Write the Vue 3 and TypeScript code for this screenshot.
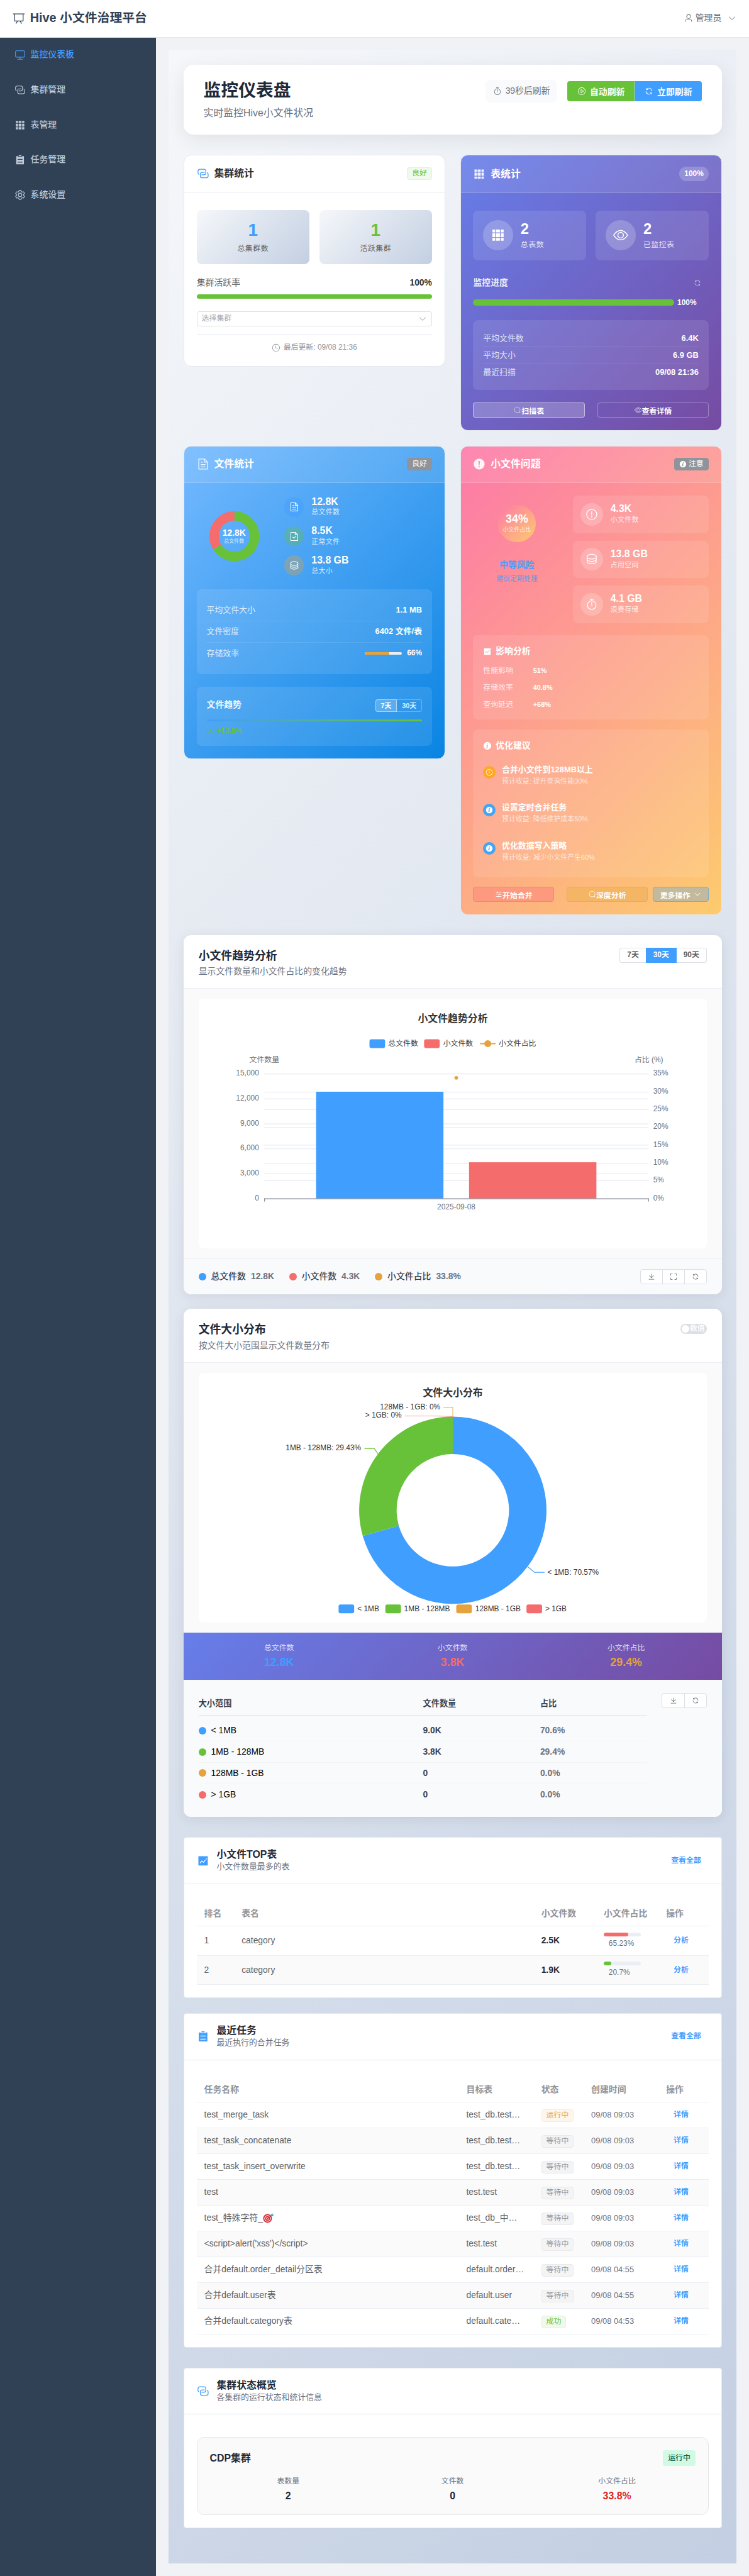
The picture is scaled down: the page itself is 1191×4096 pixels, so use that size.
<script setup lang="ts">
import { h, type FunctionalComponent } from 'vue'

const paths: Record<string, string> = {
  board: 'M32 128h960v64H32zM192 192v512h640V192H192zm-64-64h768v608a32 32 0 0 1-32 32H160a32 32 0 0 1-32-32V128zM322.176 960H248.32l144.64-250.56 55.424 32L322.176 960zm453.888 0h-73.856L576 741.44l55.424-32L776.064 960z',
  monitor: 'M544 768v128h192a32 32 0 1 1 0 64H288a32 32 0 1 1 0-64h192V768H192A128 128 0 0 1 64 640V256a128 128 0 0 1 128-128h640a128 128 0 0 1 128 128v384a128 128 0 0 1-128 128H544zM192 192a64 64 0 0 0-64 64v384a64 64 0 0 0 64 64h640a64 64 0 0 0 64-64V256a64 64 0 0 0-64-64H192z',
  connection: 'M640 384v64H448a128 128 0 0 0-128 128v128a128 128 0 0 0 128 128h320a128 128 0 0 0 128-128V576a128 128 0 0 0-64-110.848V394.88c74.56 26.368 128 97.472 128 181.056v128a192 192 0 0 1-192 192H448a192 192 0 0 1-192-192V576a192 192 0 0 1 192-192h192zM384 640v-64h192a128 128 0 0 0 128-128V320a128 128 0 0 0-128-128H256a128 128 0 0 0-128 128v128a128 128 0 0 0 64 110.848v70.272A192.064 192.064 0 0 1 64 448V320a192 192 0 0 1 192-192h320a192 192 0 0 1 192 192v128a192 192 0 0 1-192 192H384z',
  grid: 'M640 384v256H384V384h256zm64 0h192v256H704V384zm-64 512H384V704h256v192zm64 0V704h192v192H704zm-64-768v192H384V128h256zm64 0h192v192H704V128zM320 384v256H128V384h192zm0 512H128V704h192v192zm0-768v192H128V128h192z',
  list: 'M704 192h160v736H160V192h160v64h384v-64zM288 512h448v-64H288v64zm0 256h448v-64H288v64zm96-576V96h256v96H384z',
  setting: 'M600.704 64a32 32 0 0 1 30.464 22.208l35.2 109.376c14.784 7.232 28.928 15.36 42.432 24.512l112.384-24.192a32 32 0 0 1 34.432 15.36L944.32 364.8a32 32 0 0 1-4.032 37.504l-77.12 85.12a357.12 357.12 0 0 1 0 49.024l77.12 85.248a32 32 0 0 1 4.032 37.504l-88.704 153.6a32 32 0 0 1-34.432 15.296L708.8 803.904c-13.44 9.088-27.648 17.28-42.368 24.512l-35.264 109.376A32 32 0 0 1 600.704 960H423.296a32 32 0 0 1-30.464-22.208L357.696 828.48a351.616 351.616 0 0 1-42.56-24.64l-112.32 24.256a32 32 0 0 1-34.432-15.36L79.68 659.2a32 32 0 0 1 4.032-37.504l77.12-85.248a357.12 357.12 0 0 1 0-48.896l-77.12-85.248A32 32 0 0 1 79.68 364.8l88.704-153.6a32 32 0 0 1 34.432-15.296l112.32 24.256c13.568-9.152 27.776-17.408 42.56-24.64l35.2-109.312A32 32 0 0 1 423.232 64H600.64zm-23.424 64H446.72l-36.352 113.088-24.512 11.968a294.113 294.113 0 0 0-34.816 20.096l-22.656 15.36-116.224-25.088-65.28 113.152 79.68 88.192-1.92 27.136a293.12 293.12 0 0 0 0 40.192l1.92 27.136-79.808 88.192 65.344 113.152 116.224-25.024 22.656 15.296a294.113 294.113 0 0 0 34.816 20.096l24.512 11.968L446.72 896h130.688l36.48-113.152 24.448-11.904a288.282 288.282 0 0 0 34.752-20.096l22.592-15.296 116.288 25.024 65.28-113.152-79.744-88.192 1.92-27.136a293.12 293.12 0 0 0 0-40.256l-1.92-27.136 79.808-88.128-65.344-113.152-116.288 24.96-22.592-15.232a287.616 287.616 0 0 0-34.752-20.096l-24.448-11.904L577.344 128zM512 320a192 192 0 1 1 0 384 192 192 0 0 1 0-384zm0 64a128 128 0 1 0 0 256 128 128 0 0 0 0-256z',
  user: 'M512 512a192 192 0 1 0 0-384 192 192 0 0 0 0 384zm0 64a256 256 0 1 1 0-512 256 256 0 0 1 0 512zm320 320v-96a96 96 0 0 0-96-96H288a96 96 0 0 0-96 96v96a32 32 0 1 1-64 0v-96a160 160 0 0 1 160-160h448a160 160 0 0 1 160 160v96a32 32 0 1 1-64 0z',
  down: 'M831.872 340.864 512 652.672 192.128 340.864a30.592 30.592 0 0 0-42.752 0 29.12 29.12 0 0 0 0 41.6L489.664 714.24a32 32 0 0 0 44.672 0l340.288-331.712a29.12 29.12 0 0 0 0-41.728 30.592 30.592 0 0 0-42.752 0z',
  up: 'm488.832 344.32-339.84 356.672a32 32 0 0 0 0 44.16l.384.384a29.44 29.44 0 0 0 42.688 0l320-335.872 319.872 335.872a29.44 29.44 0 0 0 42.688 0l.384-.384a32 32 0 0 0 0-44.16L535.168 344.32a32 32 0 0 0-46.336 0z',
  timer: 'M512 896a320 320 0 1 0 0-640 320 320 0 0 0 0 640zm0 64a384 384 0 1 1 0-768 384 384 0 0 1 0 768zM512 320a32 32 0 0 1 32 32l-.512 224a32 32 0 1 1-64 0L480 352a32 32 0 0 1 32-32zM448 576a64 64 0 1 0 128 0 64 64 0 1 0-128 0zm96-448v128h-64V128h-96a32 32 0 0 1 0-64h256a32 32 0 1 1 0 64h-96z',
  play: 'M512 64a448 448 0 1 1 0 896 448 448 0 0 1 0-896zm0 832a384 384 0 0 0 0-768 384 384 0 0 0 0 768zm-48-247.616L668.608 512 464 375.616v272.768zm10.624-342.656 249.472 166.336a48 48 0 0 1 0 79.872L474.624 718.272A48 48 0 0 1 400 678.336V345.6a48 48 0 0 1 74.624-39.936z',
  refresh: 'M771.776 794.88A384 384 0 0 1 128 512h64a320 320 0 0 0 555.712 216.448H654.72a32 32 0 1 1 0-64h149.056a32 32 0 0 1 32 32v148.928a32 32 0 1 1-64 0v-50.56zM276.288 295.616h92.992a32 32 0 0 1 0 64H220.16a32 32 0 0 1-32-32V178.56a32 32 0 0 1 64 0v50.56A384 384 0 0 1 896.128 512h-64a320 320 0 0 0-555.776-216.384z',
  clock: 'M512 896a384 384 0 1 0 0-768 384 384 0 0 0 0 768zm0 64a448 448 0 1 1 0-896 448 448 0 0 1 0 896zM480 256a32 32 0 0 1 32 32v256a32 32 0 0 1-64 0V288a32 32 0 0 1 32-32zM480 512h256q32 0 32 32t-32 32H480q-32 0-32-32t32-32z',
  view: 'M512 160c320 0 512 352 512 352S832 864 512 864 0 512 0 512s192-352 512-352zm0 64c-225.28 0-384.128 208.064-436.8 288 52.608 79.872 211.456 288 436.8 288 225.28 0 384.128-208.064 436.8-288-52.608-79.872-211.456-288-436.8-288zm0 64a224 224 0 1 1 0 448 224 224 0 0 1 0-448zm0 64a160.192 160.192 0 0 0-160 160c0 88.192 71.744 160 160 160s160-71.808 160-160-71.744-160-160-160z',
  search: 'm795.904 750.72 124.992 124.928a32 32 0 0 1-45.248 45.248L750.656 795.904a416 416 0 1 1 45.248-45.248zM480 832a352 352 0 1 0 0-704 352 352 0 0 0 0 704z',
  doc: 'M832 384H576V128H192v768h640V384zm-26.496-64L640 154.496V320h165.504zM160 64h480l256 256v608a32 32 0 0 1-32 32H160a32 32 0 0 1-32-32V96a32 32 0 0 1 32-32zm160 448h384v64H320v-64zm0-192h160v64H320v-64zm0 384h384v64H320v-64z',
  docCheck: 'M805.504 320 640 154.496V320h165.504zM832 384H576V128H192v768h640V384zM160 64h480l256 256v608a32 32 0 0 1-32 32H160a32 32 0 0 1-32-32V96a32 32 0 0 1 32-32zm318.4 582.144 180.992-180.992L704.64 510.4 478.4 736.64 320 578.304l45.248-45.312L478.4 646.144z',
  coin: 'm161.92 580.736 29.888 58.88C171.328 659.776 160 681.728 160 704c0 82.304 155.328 160 352 160s352-77.696 352-160c0-22.272-11.392-44.16-31.808-64.32l30.464-58.432C903.936 615.808 928 657.664 928 704c0 129.728-188.544 224-416 224S96 833.728 96 704c0-46.592 24.32-88.576 65.92-123.264zM161.92 388.736l29.888 58.88C171.328 467.84 160 489.792 160 512c0 82.304 155.328 160 352 160s352-77.696 352-160c0-22.272-11.392-44.16-31.808-64.32l30.464-58.432C903.936 423.808 928 465.664 928 512c0 129.728-188.544 224-416 224S96 641.728 96 512c0-46.592 24.32-88.576 65.92-123.264zM512 544c-227.456 0-416-94.272-416-224S284.544 96 512 96s416 94.272 416 224-188.544 224-416 224zm0-64c196.672 0 352-77.696 352-160S708.672 160 512 160s-352 77.696-352 160 155.328 160 352 160z',
  warning: 'M512 64a448 448 0 1 1 0 896 448 448 0 0 1 0-896zm0 832a384 384 0 0 0 0-768 384 384 0 0 0 0 768zm48-176a48 48 0 1 1-96 0 48 48 0 0 1 96 0zm-48-464a32 32 0 0 1 32 32v288a32 32 0 0 1-64 0V288a32 32 0 0 1 32-32z',
  warningFilled: 'M512 64a448 448 0 1 1 0 896 448 448 0 0 1 0-896zm0 192a58.432 58.432 0 0 0-58.24 63.744l23.36 256.384a35.072 35.072 0 0 0 69.76 0l23.296-256.384A58.432 58.432 0 0 0 512 256zm0 512a51.2 51.2 0 1 0 0-102.4 51.2 51.2 0 0 0 0 102.4z',
  info: 'M512 64a448 448 0 1 1 0 896.064A448 448 0 0 1 512 64zm67.2 275.072c33.28 0 60.288-23.104 60.288-57.344s-27.072-57.344-60.288-57.344c-33.28 0-60.16 23.104-60.16 57.344s26.88 57.344 60.16 57.344zM590.912 699.2c0-6.848 2.368-24.64 1.024-34.752l-52.608 60.544c-10.88 11.456-24.512 19.392-30.912 17.28a12.992 12.992 0 0 1-8.256-14.72l87.68-276.992c7.168-35.136-12.544-67.2-54.336-71.296-44.096 0-108.992 44.736-148.48 101.504 0 6.784-1.28 23.68.064 33.792l52.544-60.608c10.88-11.328 23.552-19.328 29.952-17.152a12.8 12.8 0 0 1 7.808 16.128L388.48 728.576c-10.048 32.256 8.96 63.872 55.04 71.04 67.84 0 107.904-43.648 147.456-100.416z',
  trend: 'M128 896V128h768v768H128zm291.712-327.296 128 102.4 180.16-201.792-47.744-42.624-139.84 156.608-128-102.4-180.16 201.792 47.744 42.624 139.84-156.608zM816 352a48 48 0 1 0-96 0 48 48 0 0 0 96 0z',
  operation: 'M389.44 768a96.064 96.064 0 0 1 181.12 0H896v64H570.56a96.064 96.064 0 0 1-181.12 0H128v-64h261.44zm192-288a96.064 96.064 0 0 1 181.12 0H896v64H762.56a96.064 96.064 0 0 1-181.12 0H128v-64h453.44zm-320-288a96.064 96.064 0 0 1 181.12 0H896v64H442.56a96.064 96.064 0 0 1-181.12 0H128v-64h133.44z',
  download: 'M160 832h704a32 32 0 1 1 0 64H160a32 32 0 1 1 0-64zm384-253.696 236.288-236.352 45.248 45.248L508.8 704 192 387.2l45.248-45.248L480 584.704V128h64v450.304z',
  full: 'm160 96.064 192 .192a32 32 0 0 1 0 64l-192-.192V352a32 32 0 0 1-64 0V96h64v.064zm0 831.872V928H96V672a32 32 0 1 1 64 0v191.936l192-.192a32 32 0 1 1 0 64l-192 .192zM864 96.064V96h64v256a32 32 0 1 1-64 0V160.064l-192 .192a32 32 0 1 1 0-64l192-.192zm0 831.872-192-.192a32 32 0 0 1 0-64l192 .192V672a32 32 0 1 1 64 0v256h-64v-.064z',
}

const Icon: FunctionalComponent<{ name: string; size?: number }> = (props) =>
  h('svg', { viewBox: '0 0 1024 1024', width: props.size ?? 14, height: props.size ?? 14, fill: 'currentColor' }, [
    h('path', { d: paths[props.name] }),
  ])
Icon.props = ['name', 'size']

const menu = [
  { icon: 'monitor', label: '监控仪表板' },
  { icon: 'connection', label: '集群管理' },
  { icon: 'grid', label: '表管理' },
  { icon: 'list', label: '任务管理' },
  { icon: 'setting', label: '系统设置' },
]

const fileLegend = [
  { icon: 'doc', tone: 'b', value: '12.8K', label: '总文件数' },
  { icon: 'docCheck', tone: 'g', value: '8.5K', label: '正常文件' },
  { icon: 'coin', tone: 'o', value: '13.8 GB', label: '总大小' },
]
const problems = [
  { icon: 'warning', value: '4.3K', label: '小文件数' },
  { icon: 'coin', value: '13.8 GB', label: '占用空间' },
  { icon: 'timer', value: '4.1 GB', label: '浪费存储' },
]
const impacts = [
  ['性能影响', '51%'],
  ['存储效率', '40.8%'],
  ['查询延迟', '+68%'],
]
const tips = [
  { icon: 'warning', tone: 'o', title: '合并小文件到128MB以上', text: '预计收益: 提升查询性能30%' },
  { icon: 'info', tone: 'b', title: '设置定时合并任务', text: '预计收益: 降低维护成本50%' },
  { icon: 'info', tone: 'b', title: '优化数据写入策略', text: '预计收益: 减少小文件产生60%' },
]

const leftTicks = ['15,000', '12,000', '9,000', '6,000', '3,000', '0'].map((t, i) => ({ t, y: 120 + i * 40 }))
const rightTicks = [35, 30, 25, 20, 15, 10, 5, 0].map((t, i) => ({ t: t + '%', y: 120 + (i * 200) / 7 }))
const snap = (y: number) => Math.round(y) + 0.5

const sizes = [
  { c: '#409eff', n: '< 1MB', v: '9.0K', p: '70.6%' },
  { c: '#67c23a', n: '1MB - 128MB', v: '3.8K', p: '29.4%' },
  { c: '#e6a23c', n: '128MB - 1GB', v: '0', p: '0.0%' },
  { c: '#f56c6c', n: '> 1GB', v: '0', p: '0.0%' },
]
const trendLegend = [
  { c: '#409eff', n: '总文件数', v: '12.8K' },
  { c: '#f56c6c', n: '小文件数', v: '4.3K' },
  { c: '#e6a23c', n: '小文件占比', v: '33.8%' },
]

// Ring sector from angle a to b (fractions of a turn, clockwise from the top)
function sector(cx: number, cy: number, ro: number, ri: number, a: number, b: number): string {
  const pt = (r: number, f: number) =>
    `${(cx + r * Math.sin(f * 2 * Math.PI)).toFixed(2)} ${(cy - r * Math.cos(f * 2 * Math.PI)).toFixed(2)}`
  const big = b - a > 0.5 ? 1 : 0
  return `M${pt(ro, a)}A${ro} ${ro} 0 ${big} 1 ${pt(ro, b)}L${pt(ri, b)}A${ri} ${ri} 0 ${big} 0 ${pt(ri, a)}Z`
}

const topTables = [
  { rank: 1, name: 'category', count: '2.5K', pct: 65.23, c: '#f56c6c' },
  { rank: 2, name: 'category', count: '1.9K', pct: 20.7, c: '#67c23a' },
]
const tasks = [
  { name: 'test_merge_task', table: 'test_db.test…', st: '运行中', tone: 'warn', time: '09/08 09:03' },
  { name: 'test_task_concatenate', table: 'test_db.test…', st: '等待中', tone: 'info', time: '09/08 09:03' },
  { name: 'test_task_insert_overwrite', table: 'test_db.test…', st: '等待中', tone: 'info', time: '09/08 09:03' },
  { name: 'test', table: 'test.test', st: '等待中', tone: 'info', time: '09/08 09:03' },
  { name: 'test_特殊字符_', target: true, table: 'test_db_中…', st: '等待中', tone: 'info', time: '09/08 09:03' },
  { name: "<script>alert('xss')<\/script>", table: 'test.test', st: '等待中', tone: 'info', time: '09/08 09:03' },
  { name: '合并default.order_detail分区表', table: 'default.order…', st: '等待中', tone: 'info', time: '09/08 04:55' },
  { name: '合并default.user表', table: 'default.user', st: '等待中', tone: 'info', time: '09/08 04:55' },
  { name: '合并default.category表', table: 'default.cate…', st: '成功', tone: 'ok', time: '09/08 04:53' },
]
</script>

<template>
  <div class="app">
    <header class="top">
      <div class="brand"><Icon name="board" :size="20" /><span>Hive 小文件治理平台</span></div>
      <div class="user"><Icon name="user" :size="14" /><span>管理员</span><Icon class="caret" name="down" :size="14" /></div>
    </header>
    <div class="shell">
      <nav class="side">
        <a v-for="(m, i) in menu" :key="m.label" :class="{ on: i === 0 }"><i><Icon :name="m.icon" :size="18" /></i><span>{{ m.label }}</span></a>
      </nav>
      <main class="main">
        <div class="dash">
          <section class="hero">
            <div>
              <h1>监控仪表盘</h1>
              <p>实时监控Hive小文件状况</p>
            </div>
            <div class="hero-act">
              <div class="pill"><Icon name="timer" /><span>39秒后刷新</span></div>
              <div class="btns">
                <button class="green"><Icon name="play" /><span>自动刷新</span></button>
                <button class="blue"><Icon name="refresh" /><span>立即刷新</span></button>
              </div>
            </div>
          </section>

          <section class="cards">
            <article class="card">
              <div class="ch"><Icon name="connection" :size="20" class="ci" /><b>集群统计</b><span class="tag ok">良好</span></div>
              <div class="cb">
                <div class="two">
                  <div class="stat"><strong class="c-blue">1</strong><span>总集群数</span></div>
                  <div class="stat"><strong class="c-green">1</strong><span>活跃集群</span></div>
                </div>
                <div class="rate"><span>集群活跃率</span><b>100%</b></div>
                <div class="bar8"></div>
                <div class="select"><span>选择集群</span><Icon name="down" :size="14" /></div>
                <div class="upd"><Icon name="clock" :size="14" /><span>最后更新: 09/08 21:36</span></div>
              </div>
            </article>

            <article class="card purple">
              <div class="ch"><Icon name="grid" :size="20" class="ci" /><b>表统计</b><span class="round">100%</span></div>
              <div class="cb">
                <div class="two">
                  <div class="tile"><i><Icon name="grid" :size="24" /></i><div><strong>2</strong><span>总表数</span></div></div>
                  <div class="tile"><i><Icon name="view" :size="24" /></i><div><strong>2</strong><span>已监控表</span></div></div>
                </div>
                <div class="prog-h"><b>监控进度</b><Icon name="refresh" :size="12" /></div>
                <div class="prog"><div class="bar10"></div><b>100%</b></div>
                <div class="glass rows27">
                  <div><span>平均文件数</span><b>6.4K</b></div>
                  <div><span>平均大小</span><b>6.9 GB</b></div>
                  <div><span>最近扫描</span><b>09/08 21:36</b></div>
                </div>
                <div class="acts">
                  <button class="solid"><Icon name="search" :size="12" /><span>扫描表</span></button>
                  <button><Icon name="view" :size="12" /><span>查看详情</span></button>
                </div>
              </div>
            </article>

            <article class="card azure">
              <div class="ch"><Icon name="doc" :size="20" class="ci" /><b>文件统计</b><span class="tag gray">良好</span></div>
              <div class="cb">
                <div class="files">
                  <div class="ring">
                    <svg width="80" height="80" viewBox="0 0 80 80">
                      <path :d="sector(40, 40, 40, 25, 0, 0.662)" fill="#67c23a" />
                      <path :d="sector(40, 40, 40, 25, 0.662, 1)" fill="#f56c6c" />
                    </svg>
                    <div class="ring-c"><b>12.8K</b><span>总文件数</span></div>
                  </div>
                  <div class="fl">
                    <div v-for="f in fileLegend" :key="f.label">
                      <i :class="f.tone"><Icon :name="f.icon" :size="16" /></i>
                      <p><b>{{ f.value }}</b><span>{{ f.label }}</span></p>
                    </div>
                  </div>
                </div>
                <div class="glass rows35">
                  <div><span>平均文件大小</span><b>1.1 MB</b></div>
                  <div><span>文件密度</span><b>6402 文件/表</b></div>
                  <div><span>存储效率</span><em><u><s></s></u><b class="pc">66%</b></em></div>
                </div>
                <div class="glass trendbox">
                  <div class="tb-h"><b>文件趋势</b><div class="mini"><span class="on">7天</span><span>30天</span></div></div>
                  <div class="gline"></div>
                  <div class="up"><Icon name="up" :size="12" /><b>+12.5%</b></div>
                </div>
              </div>
            </article>

            <article class="card sunset">
              <div class="ch"><Icon name="warningFilled" :size="20" class="ci" /><b>小文件问题</b><span class="tag gray wi"><Icon name="info" :size="12" />注意</span></div>
              <div class="cb">
                <div class="prob">
                  <div class="risk">
                    <div class="ball"><b>34%</b><span>小文件占比</span></div>
                    <b>中等风险</b><span>建议定期处理</span>
                  </div>
                  <div class="pl">
                    <div v-for="p in problems" :key="p.label"><i><Icon :name="p.icon" :size="20" /></i><p><b>{{ p.value }}</b><span>{{ p.label }}</span></p></div>
                  </div>
                </div>
                <div class="glass impact">
                  <h4><Icon name="trend" :size="14" /><span>影响分析</span></h4>
                  <div v-for="r in impacts" :key="r[0]"><span>{{ r[0] }}</span><b>{{ r[1] }}</b></div>
                </div>
                <div class="glass tips">
                  <h4><Icon name="info" :size="14" /><span>优化建议</span></h4>
                  <div v-for="t in tips" :key="t.title"><i :class="t.tone"><Icon :name="t.icon" :size="12" /></i><p><b>{{ t.title }}</b><span>{{ t.text }}</span></p></div>
                </div>
                <div class="acts3">
                  <button class="a"><Icon name="operation" :size="12" /><span>开始合并</span></button>
                  <button class="b"><Icon name="search" :size="12" /><span>深度分析</span></button>
                  <button class="c"><span>更多操作</span><Icon name="down" :size="12" /></button>
                </div>
              </div>
            </article>
          </section>

          <section class="panel">
            <div class="ph">
              <div><h3>小文件趋势分析</h3><p>显示文件数量和小文件占比的变化趋势</p></div>
              <div class="radio"><span>7天</span><span class="on">30天</span><span>90天</span></div>
            </div>
            <div class="pb">
              <svg class="chart" width="814" height="400" viewBox="0 0 814 400">
                <text x="407" y="37" class="ttl">小文件趋势分析</text>
                <rect x="273.5" y="65" width="25" height="14" rx="3" fill="#409eff" />
                <text x="303.5" y="76" class="lg">总文件数</text>
                <rect x="361" y="65" width="25" height="14" rx="3" fill="#f56c6c" />
                <text x="391.5" y="76" class="lg">小文件数</text>
                <path d="M450.5 72h25" stroke="#e6a23c" stroke-width="2" />
                <circle cx="463" cy="72" r="5.5" fill="#e6a23c" />
                <text x="480.5" y="76" class="lg">小文件占比</text>
                <text x="105" y="102" class="ax mid">文件数量</text>
                <text x="721" y="102" class="ax mid">占比 (%)</text>
                <g stroke="#e0e6f1">
                  <path v-for="t in leftTicks" :key="'l' + t.t" :d="`M105 ${snap(t.y)}H720.5`" />
                  <path v-for="t in rightTicks" :key="'r' + t.t" :d="`M105 ${snap(t.y)}H720.5`" />
                </g>
                <text v-for="t in leftTicks" :key="'lt' + t.t" x="96.5" :y="t.y + 3.2" class="ax end">{{ t.t }}</text>
                <text v-for="t in rightTicks" :key="'rt' + t.t" x="728" :y="t.y + 3.2" class="ax">{{ t.t }}</text>
                <rect x="188" y="149" width="204" height="171" fill="#409eff" />
                <rect x="433" y="262" width="204" height="58" fill="#f56c6c" />
                <path d="M105 320.5H721M105.5 320v5M720.5 320v5" stroke="#6e7079" />
                <circle cx="412.5" cy="126.8" r="3" fill="#e6a23c" />
                <text x="412.5" y="337" class="ax mid">2025-09-08</text>
              </svg>
            </div>
            <div class="pf">
              <div class="leg" v-for="l in trendLegend" :key="l.n"><i :style="{ background: l.c }"></i><span>{{ l.n }}</span><b>{{ l.v }}</b></div>
              <div class="ibtns"><span><Icon name="download" :size="12" /></span><span><Icon name="full" :size="12" /></span><span><Icon name="refresh" :size="12" /></span></div>
            </div>
          </section>

          <section class="panel second">
            <div class="ph">
              <div><h3>文件大小分布</h3><p>按文件大小范围显示文件数量分布</p></div>
              <div class="switch"><i></i><span>数值</span></div>
            </div>
            <div class="pb">
              <svg class="chart" width="814" height="400" viewBox="0 0 814 400">
                <text x="407" y="37" class="ttl">文件大小分布</text>
                <path :d="sector(407, 220, 150, 90, 0, 0.7057)" fill="#409eff" />
                <path :d="sector(407, 220, 150, 90, 0.7057, 1)" fill="#67c23a" />
                <g fill="none" stroke-width="1.2">
                  <path d="M407 70V55H392" stroke="#e6a23c" opacity=".75" />
                  <path d="M407 70L382 69H330" stroke="#f56c6c" opacity=".7" />
                  <path d="M287.5 130L281 121H265.5" stroke="#67c23a" />
                  <path d="M527 310.5L538 319.5H554" stroke="#409eff" />
                </g>
                <text x="387" y="58" class="lg end">128MB - 1GB: 0%</text>
                <text x="325" y="72" class="lg end">&gt; 1GB: 0%</text>
                <text x="260" y="124" class="lg end">1MB - 128MB: 29.43%</text>
                <text x="558.5" y="323" class="lg">&lt; 1MB: 70.57%</text>
                <rect x="224" y="371" width="25" height="14" rx="3" fill="#409eff" />
                <text x="254" y="381.5" class="lg">&lt; 1MB</text>
                <rect x="299" y="371" width="25" height="14" rx="3" fill="#67c23a" />
                <text x="329" y="381.5" class="lg">1MB - 128MB</text>
                <rect x="412.5" y="371" width="25" height="14" rx="3" fill="#e6a23c" />
                <text x="443" y="381.5" class="lg">128MB - 1GB</text>
                <rect x="525" y="371" width="25" height="14" rx="3" fill="#f56c6c" />
                <text x="555" y="381.5" class="lg">&gt; 1GB</text>
              </svg>
            </div>
            <div class="banner">
              <div><span>总文件数</span><b class="c-blue">12.8K</b></div>
              <div><span>小文件数</span><b class="c-red">3.8K</b></div>
              <div><span>小文件占比</span><b class="c-orange">29.4%</b></div>
            </div>
            <div class="dist">
              <div class="dt">
                <div class="dr dh"><span>大小范围</span><span>文件数量</span><span>占比</span></div>
                <div v-for="s in sizes" :key="s.n" class="dr"><span class="nm"><i :style="{ background: s.c }"></i>{{ s.n }}</span><b>{{ s.v }}</b><b class="p">{{ s.p }}</b></div>
              </div>
              <div class="ibtns"><span><Icon name="download" :size="12" /></span><span><Icon name="refresh" :size="12" /></span></div>
            </div>
          </section>

          <section class="box">
            <div class="bh"><Icon name="trend" :size="20" /><div><h3>小文件TOP表</h3><p>小文件数量最多的表</p></div><a>查看全部</a></div>
            <div class="bb">
              <div class="tr t1 th"><span>排名</span><span>表名</span><span>小文件数</span><span>小文件占比</span><span>操作</span></div>
              <div v-for="r in topTables" :key="r.rank" class="tr t1 r47">
                <span>{{ r.rank }}</span><span>{{ r.name }}</span><b>{{ r.count }}</b>
                <span class="pcell"><u><s :style="{ width: r.pct + '%', background: r.c }"></s></u><em>{{ r.pct }}%</em></span><a>分析</a>
              </div>
            </div>
          </section>

          <section class="box tasks">
            <div class="bh"><Icon name="list" :size="20" /><div><h3>最近任务</h3><p>最近执行的合并任务</p></div><a>查看全部</a></div>
            <div class="bb">
              <div class="tr t2 th"><span>任务名称</span><span>目标表</span><span>状态</span><span>创建时间</span><span>操作</span></div>
              <div v-for="t in tasks" :key="t.name" class="tr t2 r41">
                <span class="tn">{{ t.name }}<svg v-if="t.target" width="18" height="16" viewBox="0 0 18 16">
                    <circle cx="7.5" cy="8.5" r="7" fill="#d9262e" />
                    <circle cx="7.5" cy="8.5" r="5.2" fill="#f6e9e9" />
                    <circle cx="7.5" cy="8.5" r="3.8" fill="#d9262e" />
                    <circle cx="7.5" cy="8.5" r="2.2" fill="#f6e9e9" />
                    <circle cx="7.5" cy="8.5" r="1.1" fill="#d9262e" />
                    <path d="M7.5 8.5L14 3.5" stroke="#6b4a3a" stroke-width="1" />
                    <path d="M12.2 4.8l.6-2.600L15.500.4l.3 1.900 1.900.5-2 2.200z" fill="#2fb3c4" />
                  </svg></span>
                <span>{{ t.table }}</span><span class="sc"><span class="tag" :class="t.tone">{{ t.st }}</span></span><span class="time">{{ t.time }}</span><a>详情</a>
              </div>
            </div>
          </section>

          <section class="box clus">
            <div class="bh"><Icon name="connection" :size="20" /><div><h3>集群状态概览</h3><p>各集群的运行状态和统计信息</p></div></div>
            <div class="bb">
              <div class="cdp">
                <div class="cdp-h"><b>CDP集群</b><span>运行中</span></div>
                <div class="cdp-s">
                  <div><span>表数量</span><b>2</b></div>
                  <div><span>文件数</span><b>0</b></div>
                  <div><span>小文件占比</span><b class="bad">33.8%</b></div>
                </div>
              </div>
            </div>
          </section>
        </div>
      </main>
    </div>
  </div>
</template>

<style>
body { margin: 0; background: #f0f2f5; }
</style>

<style scoped>
.app { zoom: 0.99273; width: 1199.7px; height: 4125.9px; font-family: "Liberation Sans", "Noto Sans CJK SC", sans-serif; font-size: 14px; line-height: 20px; color: #303133; background: #f0f2f5; overflow: hidden; display: flex; flex-direction: column; }
.app * { box-sizing: border-box; }
h1, h3, h4, p { margin: 0; }
i, em { font-style: normal; }
u, s { text-decoration: none; display: block; }
svg { display: block; flex: none; }
button { font-family: inherit; margin: 0; }
.c-blue { color: #409eff; } .c-green { color: #67c23a; } .c-red { color: #f56c6c; } .c-orange { color: #e6a23c; }

.top { height: 60px; flex: none; background: #fff; border-bottom: 1px solid #e4e7ed; display: flex; justify-content: space-between; padding: 0 20px; align-items: center; }
.brand { display: flex; gap: 8px; align-items: center; font-size: 20px; font-weight: 600; color: #304156; line-height: 28px; }
.user { display: flex; align-items: center; color: #606266; font-size: 14px; gap: 4px; }
.user .caret { margin-left: 6px; color: #909399; }
.shell { flex: 1; display: flex; min-height: 0; }
.side { width: 250px; background: #304156; flex: none; }
.side a { display: flex; align-items: center; height: 56px; padding-left: 20px; color: #bfcbd9; gap: 5px; font-weight: 500; }
.side a i { width: 24px; display: flex; justify-content: center; }
.side a.on { color: #409eff; }
.main { flex: 1; padding: 20px; }
.dash { height: 4026px; padding: 24px; background: linear-gradient(135deg, #f5f7fa 0%, #c3cfe2 100%); }

.hero { height: 112px; background: #fff; border-radius: 16px; padding: 24px 32px; display: flex; justify-content: space-between; align-items: flex-start; box-shadow: 0 8px 32px rgba(0, 0, 0, .08); }
.hero h1 { font-size: 28px; line-height: 34px; color: #1f2937; font-weight: 700; }
.hero p { margin-top: 8px; font-size: 16px; line-height: 22px; color: #6b7280; }
.hero-act { display: flex; gap: 16px; align-items: center; }
.pill { height: 36px; padding: 0 12px; border-radius: 8px; background: #f8fafc; display: flex; gap: 6px; align-items: center; color: #6b7280; }
.btns { display: flex; }
.btns button { height: 32px; width: 107.5px; border: 0; color: #fff; font-size: 14px; font-weight: 600; display: flex; gap: 6px; align-items: center; justify-content: center; padding: 0; }
.btns .green { background: #67c23a; border-radius: 4px 0 0 4px; }
.btns .blue { background: #409eff; border-radius: 0 4px 4px 0; border-left: 1px solid rgba(255, 255, 255, .5); }

.cards { margin-top: 32px; display: grid; grid-template-columns: 1fr 1fr; gap: 24px; align-items: start; }
.card { border: 1px solid #e4e7ed; border-radius: 12px; background: #fff; overflow: hidden; }
.ch { display: flex; align-items: center; height: 59px; padding: 0 20px; border-bottom: 1px solid #e4e7ed; font-size: 16px; }
.ch b { margin-left: 8px; flex: 1; line-height: 22px; font-weight: 600; }
.ch .ci { color: #409eff; }
.cb { padding: 28px 20px 20px; }
.tag { display: inline-flex; align-items: center; gap: 4px; height: 20px; padding: 0 7px; font-size: 12px; line-height: 18px; border: 1px solid; border-radius: 4px; }
.tag.ok { color: #67c23a; background: #f0f9eb; border-color: #e1f3d8; }
.tag.warn { color: #e6a23c; background: #fdf6ec; border-color: #faecd8; }
.tag.info { color: #909399; background: #f4f4f5; border-color: #e9e9eb; }
.tag.gray { color: #fff; background: #909399; border-color: #909399; }
.ch .tag { padding: 0 7px; }
.two { display: grid; grid-template-columns: 1fr 1fr; gap: 16px; }
.stat { height: 86.7px; border-radius: 8px; padding-top: 16px; background: linear-gradient(135deg, #f5f7fa, #c3cfe2); display: flex; flex-direction: column; align-items: center; }
.stat strong { font-size: 28px; line-height: 34px; font-weight: 700; }
.stat span { margin-top: 4px; font-size: 12px; line-height: 17px; letter-spacing: .5px; color: #606266; }
.rate { margin-top: 19.3px; display: flex; justify-content: space-between; line-height: 21px; color: #606266; }
.rate b { color: #303133; }
.bar8 { margin-top: 8px; height: 8px; border-radius: 4px; background: #67c23a; }
.select { margin-top: 20px; height: 24px; border: 1px solid #dcdfe6; border-radius: 4px; display: flex; justify-content: space-between; align-items: center; padding: 0 7px; font-size: 12px; color: #a8abb2; }
.upd { margin-top: 12px; border-top: 1px solid #ebeef5; padding-top: 12px; display: flex; justify-content: center; align-items: center; gap: 5px; font-size: 12px; line-height: 18px; color: #909399; }

.purple, .azure, .sunset { color: #fff; }
.purple { background: linear-gradient(135deg, #667eea, #764ba2); }
.azure { background: linear-gradient(135deg, #74b9ff, #0984e3); }
.sunset { background: linear-gradient(135deg, #fd79a8, #fdcb6e); }
.purple .ch, .azure .ch, .sunset .ch { background: rgba(255, 255, 255, .1); border-color: rgba(255, 255, 255, .2); }
.purple .ch { height: 60px; }
.purple .ci, .azure .ci, .sunset .ci { color: rgba(255, 255, 255, .9); }
.round { height: 23px; line-height: 23px; border-radius: 12px; padding: 0 8px; font-size: 12px; font-weight: 700; background: rgba(255, 255, 255, .2); }
.tile { height: 80px; border-radius: 8px; background: rgba(255, 255, 255, .1); padding: 16px; display: flex; gap: 12px; }
.tile i { width: 48px; height: 48px; border-radius: 50%; background: rgba(255, 255, 255, .2); display: flex; align-items: center; justify-content: center; }
.tile strong { display: block; font-size: 24px; line-height: 29px; }
.tile span { display: block; margin-top: 3px; font-size: 12px; line-height: 16px; letter-spacing: .5px; color: rgba(255, 255, 255, .8); }
.prog-h { margin-top: 24px; height: 24px; display: flex; justify-content: space-between; align-items: center; padding-right: 12px; }
.prog-h b { color: rgba(255, 255, 255, .9); font-weight: 600; }
.prog-h svg { color: rgba(255, 255, 255, .7); }
.prog { margin-top: 12px; height: 17px; display: flex; align-items: center; gap: 5px; font-size: 12px; }
.bar10 { width: 322px; height: 10px; border-radius: 5px; background: #67c23a; margin-top: -1px; }
.glass { border-radius: 8px; background: rgba(255, 255, 255, .1); padding: 16px; }
.rows27 { margin-top: 19px; font-size: 13px; }
.rows27 div { height: 27px; display: flex; justify-content: space-between; align-items: center; border-bottom: 1px solid rgba(255, 255, 255, .1); }
.rows27 div:last-child { height: 26px; border: 0; }
.rows27 span, .rows35 span { color: rgba(255, 255, 255, .8); }
.acts { margin-top: 20px; display: grid; grid-template-columns: 179px 178px; justify-content: space-between; }
.acts button, .acts3 button { height: 24px; padding: 0; border-radius: 4px; border: 1px solid rgba(255, 255, 255, .3); background: transparent; color: #fff; font-size: 12px; font-weight: 600; display: flex; align-items: center; justify-content: center; }
.acts svg { opacity: .75; }
.acts .solid { background: rgba(255, 255, 255, .2); border-color: rgba(255, 255, 255, .5); }

.azure .cb { padding: 22px 20px 20px; }
.files { display: flex; gap: 20px; height: 126px; align-items: center; }
.ring { width: 120px; display: flex; justify-content: center; position: relative; }
.ring-c { position: absolute; inset: 0; display: flex; flex-direction: column; align-items: center; justify-content: center; padding-top: 1px; }
.ring-c b { font-size: 14px; line-height: 15px; }
.ring-c span { font-size: 8px; line-height: 12px; color: rgba(255, 255, 255, .8); }
.fl { display: flex; flex-direction: column; gap: 12px; }
.fl div { display: flex; gap: 12px; height: 35px; align-items: center; }
.fl i { width: 32px; height: 32px; border-radius: 50%; display: flex; align-items: center; justify-content: center; }
.fl .b { background: rgba(64, 158, 255, .4); } .fl .g { background: rgba(103, 194, 58, .33); } .fl .o { background: rgba(230, 162, 60, .33); }
.fl b, .pl b { display: block; font-size: 16px; line-height: 19px; }
.fl span, .pl span { display: block; font-size: 11px; line-height: 16px; letter-spacing: .3px; color: rgba(255, 255, 255, .8); }
.rows35 { margin-top: 22px; height: 136px; font-size: 13px; }
.rows35 div { height: 35px; display: flex; justify-content: space-between; align-items: center; border-bottom: 1px solid rgba(255, 255, 255, .1); }
.rows35 div:last-child { height: 34px; border: 0; }
.rows35 em { display: flex; gap: 8px; align-items: center; }
.rows35 u { width: 60px; height: 4px; border-radius: 2px; background: #ebeef5; }
.rows35 s { width: 39.5px; height: 4px; background: #e6a23c; border-radius: 2px 0 0 2px; }
.rows35 .pc { font-size: 12px; }
.trendbox { margin-top: 20px; height: 95px; padding-top: 20px; }
.tb-h { display: flex; justify-content: space-between; height: 21px; }
.tb-h b { line-height: 17px; font-weight: 600; color: rgba(255, 255, 255, .92); }
.mini { display: flex; font-size: 11px; line-height: 19px; text-align: center; }
.mini span { border: 1px solid rgba(255, 255, 255, .3); width: 40px; height: 21px; color: rgba(255, 255, 255, .85); font-weight: 600; }
.mini .on { width: 35px; background: rgba(255, 255, 255, .2); border-color: rgba(255, 255, 255, .5); color: #fff; border-radius: 4px 0 0 4px; }
.mini span:last-child { border-left: 0; border-radius: 0 4px 4px 0; }
.gline { margin-top: 12px; height: 3px; border-radius: 2px; background: linear-gradient(90deg, #409eff, #67c23a); }
.up { margin-top: 7px; display: flex; gap: 4px; align-items: center; color: #67c23a; font-size: 12px; line-height: 18px; }

.sunset .cb { padding: 20px; }
.wi { gap: 3px; }
.prob { display: flex; gap: 20px; height: 204px; }
.risk { width: 140px; padding-top: 15px; display: flex; flex-direction: column; align-items: center; }
.ball { width: 60px; height: 60px; border-radius: 50%; background: linear-gradient(135deg, #fd79a8, #fdcb6e); display: flex; flex-direction: column; align-items: center; padding-top: 12px; }
.ball b { font-size: 18px; line-height: 21px; }
.ball span { font-size: 9px; line-height: 13px; color: rgba(255, 255, 255, .8); white-space: nowrap; }
.risk > b { margin-top: 27px; color: #409eff; font-weight: 600; line-height: 20px; }
.risk > span { margin-top: 4px; font-size: 11px; line-height: 16px; color: #409eff; opacity: .8; }
.pl { flex: 1; display: flex; flex-direction: column; gap: 12px; }
.pl div { height: 60px; border-radius: 8px; background: rgba(255, 255, 255, .1); padding: 12px; display: flex; gap: 12px; align-items: center; }
.pl i { width: 36px; height: 36px; border-radius: 50%; background: rgba(255, 255, 255, .2); display: flex; align-items: center; justify-content: center; }
.glass h4 { display: flex; gap: 6px; align-items: center; font-size: 14px; line-height: 20px; font-weight: 600; }
.impact { margin-top: 20px; height: 135px; }
.impact div { display: grid; grid-template-columns: 80px 1fr; font-size: 12px; line-height: 17px; margin-top: 10px; }
.impact h4 + div { margin-top: 12px; }
.impact div span { color: rgba(255, 255, 255, .8); }
.impact div b { font-size: 11px; }
.tips { margin-top: 16px; height: 236px; }
.tips div { display: flex; gap: 10px; height: 61px; }
.tips h4 + div { margin-top: 16px; }
.tips i { width: 20px; height: 20px; border-radius: 50%; margin-top: 6px; display: flex; align-items: center; justify-content: center; }
.tips .o { background: #ffa726; } .tips .b { background: #42a5f5; }
.tips p b { display: block; margin-top: 3px; font-size: 13px; line-height: 18px; font-weight: 600; }
.tips p span { display: block; font-size: 11px; line-height: 20px; color: rgba(255, 255, 255, .7); }
.acts3 { margin-top: 16px; display: flex; }
.acts3 .a { width: 130px; background: #fd997f; border-color: #f78475; }
.acts3 .b { width: 130px; margin-left: 20px; background: #f4b565; border-color: #e9ab5b; }
.acts3 .c { width: 89px; margin-left: 8px; background: #c3b99c; border-color: #7fabcd; gap: 6px; }

.panel { margin-top: 32px; border-radius: 12px; overflow: hidden; background: #fff; box-shadow: 0 4px 20px rgba(0, 0, 0, .08); }
.second { margin-top: 24px; }
.ph { height: 86px; border-bottom: 1px solid #ebeef5; padding: 20px 24px 0; display: flex; justify-content: space-between; align-items: flex-start; }
.ph h3 { font-size: 18px; line-height: 27px; font-weight: 600; color: #1f2937; }
.ph p { margin-top: 2px; line-height: 20px; color: #6b7280; }
.radio { display: flex; font-size: 12px; line-height: 22px; color: #606266; font-weight: 600; }
.radio span { border: 1px solid #dcdfe6; padding: 0 11px; height: 24px; }
.radio span:first-child { border-radius: 4px 0 0 4px; border-right: 0; }
.radio span:last-child { border-radius: 0 4px 4px 0; border-left: 0; }
.radio .on { background: #409eff; border-color: #409eff; color: #fff; }
.pb { padding: 16px 24px; background: #fafafa; }
.chart { background: #fff; border-radius: 8px; font-family: inherit; }
.ttl { font-size: 16px; font-weight: 600; fill: #333; text-anchor: middle; }
.lg { font-size: 12px; fill: #333; }
.ax { font-size: 12px; fill: #6e7079; }
.mid { text-anchor: middle; } .end { text-anchor: end; }
.pf { height: 57px; border-top: 1px solid #ebeef5; background: #f9fafc; padding: 0 24px; display: flex; gap: 24px; align-items: center; }
.leg { display: flex; gap: 8px; align-items: center; color: #374151; font-weight: 500; }
.leg i, .nm i { width: 12px; height: 12px; border-radius: 50%; }
.leg b { color: #6b7280; font-weight: 600; }
.ibtns { margin-left: auto; display: flex; height: 24px; border: 1px solid #dcdfe6; border-radius: 4px; background: #fff; color: #606266; }
.ibtns span { width: 35px; display: flex; align-items: center; justify-content: center; }
.ibtns span + span { border-left: 1px solid #dcdfe6; }
.switch { width: 42px; height: 16px; margin-top: 4px; border-radius: 8px; background: #dcdfe6; display: flex; align-items: center; padding-left: 2px; color: #fff; font-size: 12px; line-height: 16px; font-weight: 500; }
.switch i { width: 12px; height: 12px; border-radius: 50%; background: #fff; margin-right: 1px; flex: none; }
.switch span { white-space: nowrap; }
.banner { height: 76px; padding: 16px 24px; display: grid; grid-template-columns: repeat(3, 1fr); gap: 20px; background: linear-gradient(135deg, #667eea, #764ba2); text-align: center; }
.banner span { display: block; font-size: 12px; line-height: 18px; color: rgba(255, 255, 255, .8); }
.banner b { display: block; margin-top: 4px; font-size: 18px; line-height: 22px; }
.dist { height: 220px; padding: 21px 24px; background: #f9fafc; display: flex; }
.dt { width: 719px; }
.dr { display: grid; grid-template-columns: 2fr 1fr 1fr; gap: 16px; height: 34px; align-items: center; border-bottom: 1px solid #f3f4f6; color: #374151; }
.dr:last-child { border: 0; }
.dh { height: 36px; border-bottom: 2px solid #e5e7eb; font-size: 13.3px; font-weight: 600; margin-bottom: 8px; }
.nm { display: flex; gap: 8px; align-items: center; color: #000; }
.dr b { font-weight: 600; } .dr .p { color: #6b7280; }

.box { margin-top: 32px; background: #fff; border: 1px solid #e4e7ed; border-radius: 4px; height: 258px; }
.tasks { margin-top: 24px; height: 536px; }
.clus { height: 257px; }
.bh { height: 74px; border-bottom: 1px solid #e4e7ed; padding: 0 20px; display: flex; align-items: center; color: #409eff; }
.bh div { flex: 1; margin-left: 12px; }
.bh h3 { font-size: 16px; line-height: 19px; color: #1f2937; font-weight: 600; }
.bh p { font-size: 13px; line-height: 18px; color: #6b7280; }
.bh a { font-size: 12px; font-weight: 600; margin-right: 12px; }
.bb { padding: 28px 20px 20px; }
.tr { display: grid; align-items: center; border-bottom: 1px solid #ebeef5; color: #606266; }
.tr > * { padding-left: 12px; white-space: nowrap; }
.t1 { grid-template-columns: 60px 480px 100px 100px 80px; }
.t2 { grid-template-columns: 420px 120px 80px 120px 80px; }
.th { height: 40px; color: #909399; font-weight: 600; }
.r47 { height: 47px; }
.r47 b { color: #1f2937; }
.r41 { height: 41.33px; }
.tr:nth-child(odd):not(.th) { background: #fafafa; }
.tr a { color: #409eff; font-size: 12px; font-weight: 600; padding-left: 24px; }
.pcell u { width: 60px; height: 6px; border-radius: 3px; background: #ebeef5; overflow: hidden; }
.pcell s { height: 6px; border-radius: 3px; }
.pcell em { display: block; margin: 3px 0 0 8px; font-size: 12px; line-height: 18px; color: #6b7280; }
.sc { display: flex; padding-top: 2px; }
.time { font-size: 13px; color: #6b7280; }
.tn { display: flex; align-items: center; }
.clus .bb { padding-top: 36px; }
.cdp { height: 125px; border: 2px solid #e5e7eb; border-radius: 12px; background: #fafafa; padding: 20px; }
.cdp-h { display: flex; justify-content: space-between; align-items: center; font-size: 16px; color: #1f2937; }
.cdp-h span { height: 25px; line-height: 25px; padding: 0 8px; border-radius: 4px; background: #d1fae5; color: #065f46; font-size: 12px; font-weight: 500; }
.cdp-s { margin-top: 16px; display: grid; grid-template-columns: repeat(3, 1fr); gap: 12px; text-align: center; }
.cdp-s span { display: block; font-size: 12px; line-height: 18px; color: #6b7280; }
.cdp-s b { display: block; margin-top: 4px; font-size: 16px; line-height: 20px; color: #1f2937; }
.cdp-s .bad { color: #dc2626; }
</style>
